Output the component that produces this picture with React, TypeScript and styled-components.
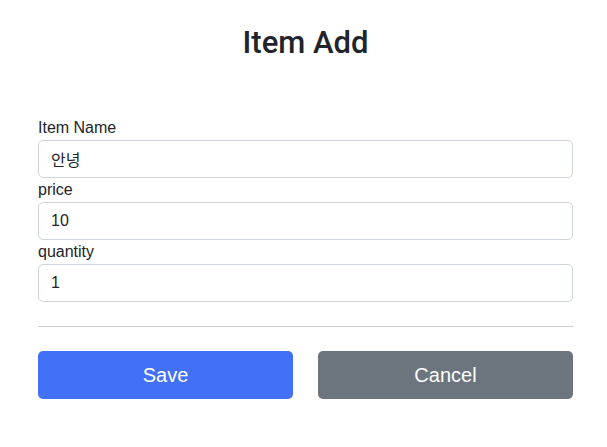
import React from "react";
import styled, { createGlobalStyle } from "styled-components";

const GlobalStyle = createGlobalStyle`
  * {
    box-sizing: border-box;
  }
  body {
    margin: 0;
    background: #ffffff;
    color: #212529;
    font-family: "Liberation Sans", Arial, "Noto Sans CJK KR", sans-serif;
    font-size: 16px;
    line-height: 1.5;
  }
`;

const Page = styled.div`
  width: 535px;
  margin-left: 38px;
  padding-top: 25px;
`;

const Title = styled.h2`
  margin: 0 0 56px;
  text-align: center;
  font-family: Roboto, "Liberation Sans", Arial, sans-serif;
  font-size: 31px;
  font-weight: 500;
  line-height: 36px;
  color: #212529;
`;

const Form = styled.form`
  display: flex;
  flex-direction: column;
  margin-top: -1px;
`;

const Label = styled.label`
  display: block;
  height: 24px;
  line-height: 24px;
`;

const Input = styled.input`
  display: block;
  width: 100%;
  height: 38px;
  padding: 6px 12px;
  border: 1px solid #ced4da;
  border-radius: 5px;
  font-family: "Liberation Sans", Arial, "Noto Sans CJK KR", sans-serif;
  font-size: 16px;
  color: #212529;
  background: #ffffff;
  outline: none;
`;

const Divider = styled.hr`
  margin: 24px 0;
  border: 0;
  border-top: 1px solid #cbcbcb;
`;

const ButtonRow = styled.div`
  display: grid;
  grid-template-columns: 1fr 1fr;
  column-gap: 25px;
`;

const Button = styled.button<{ $variant: "primary" | "secondary" }>`
  height: 48px;
  border: 0;
  border-radius: 5px;
  font-family: "Liberation Sans", Arial, sans-serif;
  font-size: 20px;
  color: #ffffff;
  background: ${(p) => (p.$variant === "primary" ? "#4270f7" : "#6c757d")};
  cursor: pointer;
`;

const fields = [
  { id: "itemName", label: "Item Name", value: "안녕" },
  { id: "price", label: "price", value: "10" },
  { id: "quantity", label: "quantity", value: "1" },
];

const App = () => {
  return (
    <>
      <GlobalStyle />
      <Page>
        <Title>Item Add</Title>
        <Form onSubmit={(e) => e.preventDefault()}>
          {fields.map((field) => (
            <div key={field.id}>
              <Label htmlFor={field.id}>{field.label}</Label>
              <Input id={field.id} defaultValue={field.value} />
            </div>
          ))}
        </Form>
        <Divider />
        <ButtonRow>
          <Button $variant="primary">Save</Button>
          <Button $variant="secondary" type="button">
            Cancel
          </Button>
        </ButtonRow>
      </Page>
    </>
  );
};

export default App;
